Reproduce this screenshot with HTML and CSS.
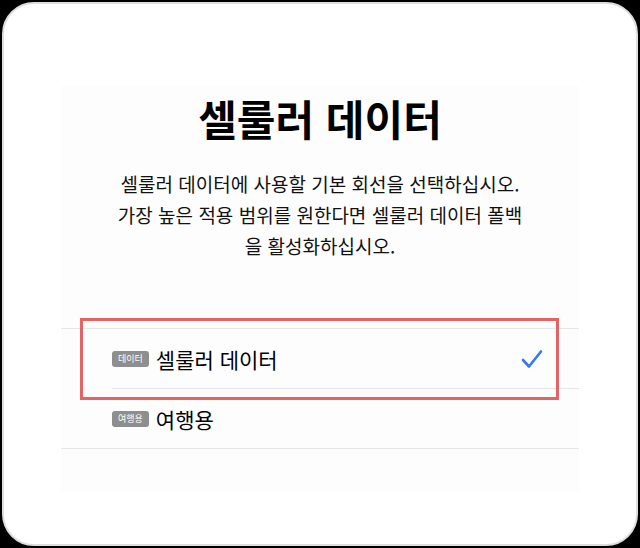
FILE: index.html
```html
<!DOCTYPE html>
<html lang="ko">
<head>
    <meta charset="UTF-8">
    <meta name="viewport" content="width=device-width, initial-scale=1.0">
    <title>셀룰러 데이터</title>
    <link rel="stylesheet" href="styles.css">
</head>
<body>
    <div class="card">
        <div class="panel">
            <h1 class="title">셀룰러 데이터</h1>
            <p class="desc">
                셀룰러 데이터에 사용할 기본 회선을 선택하십시오.<br>
                가장 높은 적용 범위를 원한다면 셀룰러 데이터 폴백<br>
                을 활성화하십시오.
            </p>

            <div class="list">
                <div class="row">
                    <span class="badge">데이터</span>
                    <span class="label">셀룰러 데이터</span>
                    <svg class="check" width="22" height="20" viewBox="0 0 22 20">
                        <path d="M2 11 L8 17.5 L20 2.5" fill="none" stroke="#3478f6" stroke-width="2.6" stroke-linecap="round" stroke-linejoin="round"/>
                    </svg>
                </div>
                <div class="row">
                    <span class="badge">여행용</span>
                    <span class="label">여행용</span>
                </div>
                <div class="highlight"></div>
            </div>
        </div>
    </div>
</body>
</html>
```

FILE: styles.css
```css
html, body {
    margin: 0;
    padding: 0;
}
body {
    background-color: #000;
    font-family: "Noto Sans CJK KR", "Noto Sans", sans-serif;
    color: #111;
    width: 640px;
    height: 548px;
    overflow: hidden;
}
.card {
    box-sizing: border-box;
    margin: 2px 2px 0 2px;
    height: 544px;
    background-color: #fff;
    border: 2px solid #dedede;
    border-radius: 32px;
    padding-top: 82px;
}
.panel {
    width: 518px;
    height: 406px;
    margin: 0 auto;
    background-color: #fdfdfd;
}
.title {
    margin: 0;
    padding-top: 8px;
    font-size: 42px;
    line-height: 48px;
    font-weight: bold;
    text-align: center;
    color: #000;
}
.desc {
    margin: 26px 0 0 0;
    font-size: 19px;
    line-height: 31px;
    text-align: center;
    color: #111;
}
.list {
    position: relative;
    margin-top: 67px;
    border-top: 1px solid #e6e6e6;
    border-bottom: 1px solid #e6e6e6;
}
.row {
    display: flex;
    align-items: center;
    height: 59px;
    margin-left: 51px;
    padding-right: 36px;
}
.row + .row {
    border-top: 1px solid #e6e6e6;
}
.badge {
    background-color: #8e8e8e;
    color: #fff;
    font-size: 9px;
    line-height: 16px;
    padding: 0 6px;
    border-radius: 3px;
    margin-right: 7px;
}
.label {
    font-size: 21px;
    flex: 1;
    color: #000;
}
.highlight {
    position: absolute;
    left: 19px;
    top: -11px;
    width: 473px;
    height: 76px;
    border: 3px solid #e26464;
}
```
